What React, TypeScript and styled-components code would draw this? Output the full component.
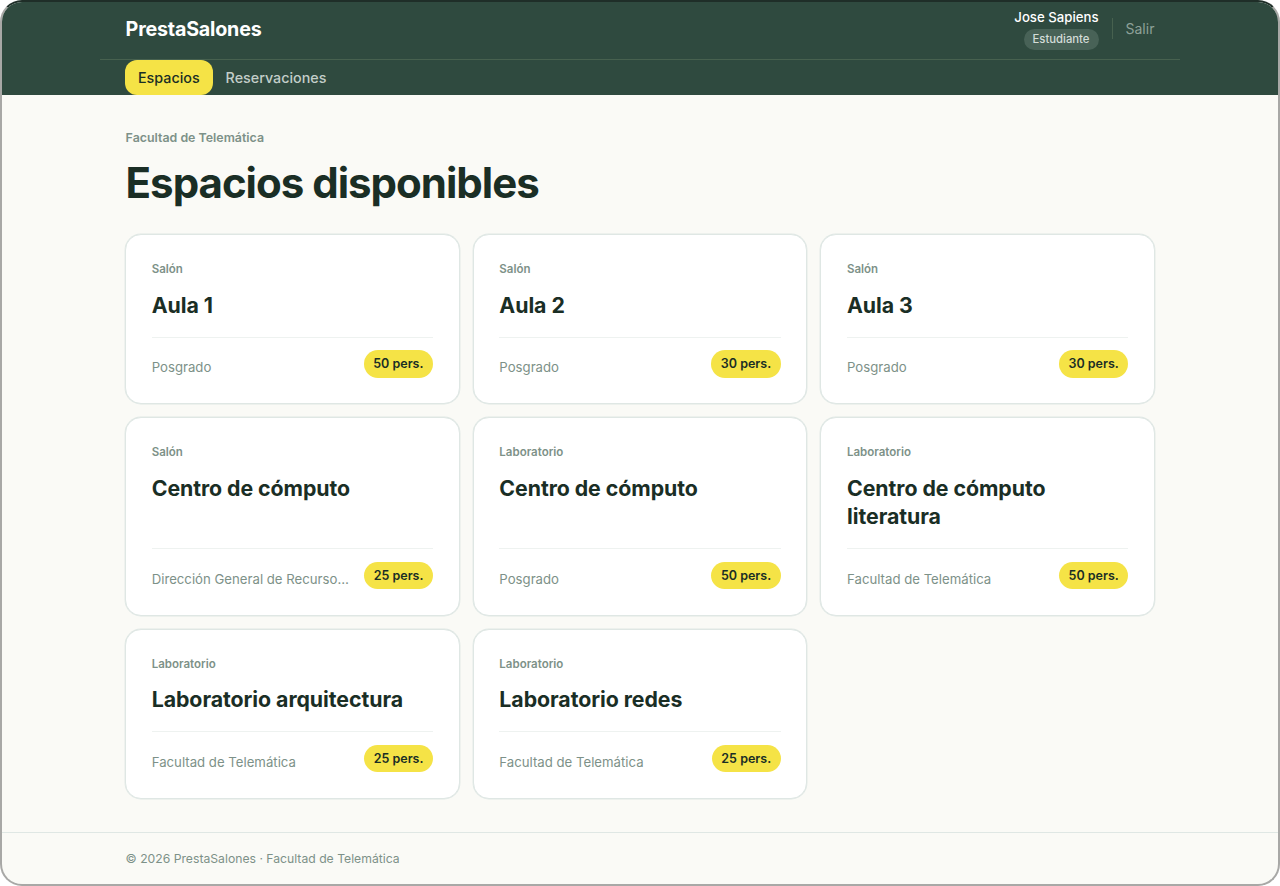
import { createGlobalStyle } from "styled-components";
import styled from "styled-components";

const colors = {
  forest: "#2f4a3f",
  ink: "#1a2e25",
  muted: "#7d9188",
  yellow: "#f5e346",
  paper: "#fafaf6",
  line: "#dfe7e4",
};

const GlobalStyle = createGlobalStyle`
  html, body {
    margin: 0;
    padding: 0;
    background: #ffffff;
  }
  * {
    box-sizing: border-box;
  }
  body {
    font-family: Inter, "Liberation Sans", sans-serif;
  }
`;

const Frame = styled.div`
  width: 1280px;
  height: 886px;
  display: flex;
  flex-direction: column;
  overflow: hidden;
  background: ${colors.paper};
  border: 2px solid #a8a8a6;
  border-top-color: #1f2e28;
  border-radius: 22px;
`;

const Header = styled.header`
  background: ${colors.forest};
  height: 93px;
  flex: none;
`;

const HeaderInner = styled.div`
  width: 1080px;
  margin: 0 auto;
`;

const TopRow = styled.div`
  height: 58px;
  padding: 0 25.6px 4px;
  display: flex;
  align-items: center;
  justify-content: space-between;
  border-bottom: 1px solid #47614f;
`;

const Logo = styled.div`
  color: #ffffff;
  font-size: 19.7px;
  font-weight: 700;
  letter-spacing: -0.2px;
`;

const UserArea = styled.div`
  display: flex;
  align-items: center;
`;

const UserInfo = styled.div`
  display: flex;
  flex-direction: column;
  align-items: flex-end;
  gap: 4px;
  margin-top: 2px;
`;

const UserName = styled.div`
  color: #ffffff;
  font-size: 13.2px;
  font-weight: 500;
  line-height: 16px;
`;

const RoleBadge = styled.div`
  background: #486257;
  color: #d3dcd7;
  font-size: 11.3px;
  font-weight: 500;
  line-height: 21px;
  padding: 0 9px;
  border-radius: 11px;
`;

const Logout = styled.div`
  color: #8ea198;
  font-size: 14px;
  margin-left: 13px;
  padding-left: 13px;
  border-left: 1px solid #47614f;
  line-height: 21px;
`;

const Nav = styled.nav`
  height: 35px;
  padding: 0 25px;
  display: flex;
  align-items: center;
`;

const NavItem = styled.div<{ $active?: boolean }>`
  height: 35px;
  padding: 0 13px;
  display: flex;
  align-items: center;
  font-size: 14.3px;
  font-weight: 500;
  color: ${({ $active }) => ($active ? colors.ink : "#c3cec9")};
  background: ${({ $active }) => ($active ? colors.yellow : "transparent")};
  border-radius: ${({ $active }) => ($active ? "12px" : "0")};
`;

const Main = styled.main`
  flex: 1;
  width: 1080px;
  margin: 0 auto;
  padding: 35px 25px 0;
`;

const Eyebrow = styled.div`
  color: ${colors.muted};
  font-size: 12.4px;
  font-weight: 600;
  line-height: 16px;
  margin-left: 0.6px;
`;

const Title = styled.h1`
  margin: 11px 0 25px 0.6px;
  color: ${colors.ink};
  font-size: 42px;
  font-weight: 700;
  letter-spacing: -1px;
  line-height: 52px;
`;

const Grid = styled.div`
  display: grid;
  grid-template-columns: repeat(3, 1fr);
  gap: 13px;
  align-items: stretch;
`;

const Card = styled.article`
  display: flex;
  flex-direction: column;
  background: #ffffff;
  border: 1px solid ${colors.line};
  box-shadow: 0 0 0 0.4px ${colors.line};
  border-radius: 16px;
  padding: 26px 25.6px 25.4px 25.7px;
`;

const Kind = styled.div`
  color: ${colors.muted};
  font-size: 11.5px;
  font-weight: 600;
  line-height: 16px;
`;

const CardTitle = styled.h2`
  margin: 13.6px 0 17.6px;
  flex: 1;
  color: ${colors.ink};
  font-size: 21.3px;
  font-weight: 700;
  letter-spacing: -0.05px;
  line-height: 28.5px;
`;

const CardFooter = styled.div`
  display: flex;
  align-items: flex-start;
  justify-content: space-between;
  border-top: 1px solid #eef2f0;
  padding-top: 12.5px;
`;

const Place = styled.div`
  color: ${colors.muted};
  font-size: 13.2px;
  line-height: 16px;
  margin-top: 9px;
  white-space: nowrap;
`;

const Capacity = styled.div`
  background: ${colors.yellow};
  color: ${colors.ink};
  font-size: 12.5px;
  font-weight: 600;
  line-height: 27.5px;
  padding: 0 9.6px;
  border-radius: 14px;
  white-space: nowrap;
`;

const Footer = styled.footer`
  flex: none;
  height: 52px;
  border-top: 1px solid ${colors.line};
`;

const FooterInner = styled.div`
  width: 1080px;
  margin: 0 auto;
  padding: 0 25.6px;
  line-height: 52px;
  color: ${colors.muted};
  font-size: 12.2px;
`;

const spaces = [
  { kind: "Salón", name: "Aula 1", place: "Posgrado", seats: 50 },
  { kind: "Salón", name: "Aula 2", place: "Posgrado", seats: 30 },
  { kind: "Salón", name: "Aula 3", place: "Posgrado", seats: 30 },
  { kind: "Salón", name: "Centro de cómputo", place: "Dirección General de Recurso…", seats: 25 },
  { kind: "Laboratorio", name: "Centro de cómputo", place: "Posgrado", seats: 50 },
  { kind: "Laboratorio", name: "Centro de cómputo literatura", place: "Facultad de Telemática", seats: 50 },
  { kind: "Laboratorio", name: "Laboratorio arquitectura", place: "Facultad de Telemática", seats: 25 },
  { kind: "Laboratorio", name: "Laboratorio redes", place: "Facultad de Telemática", seats: 25 },
];

export default function App() {
  return (
    <>
      <GlobalStyle />
      <Frame>
        <Header>
          <HeaderInner>
            <TopRow>
              <Logo>PrestaSalones</Logo>
              <UserArea>
                <UserInfo>
                  <UserName>Jose Sapiens</UserName>
                  <RoleBadge>Estudiante</RoleBadge>
                </UserInfo>
                <Logout>Salir</Logout>
              </UserArea>
            </TopRow>
            <Nav>
              <NavItem $active>Espacios</NavItem>
              <NavItem>Reservaciones</NavItem>
            </Nav>
          </HeaderInner>
        </Header>
        <Main>
          <Eyebrow>Facultad de Telemática</Eyebrow>
          <Title>Espacios disponibles</Title>
          <Grid>
            {spaces.map((space, i) => (
              <Card key={i}>
                <Kind>{space.kind}</Kind>
                <CardTitle>{space.name}</CardTitle>
                <CardFooter>
                  <Place>{space.place}</Place>
                  <Capacity>{space.seats} pers.</Capacity>
                </CardFooter>
              </Card>
            ))}
          </Grid>
        </Main>
        <Footer>
          <FooterInner>© 2026 PrestaSalones · Facultad de Telemática</FooterInner>
        </Footer>
      </Frame>
    </>
  );
}
